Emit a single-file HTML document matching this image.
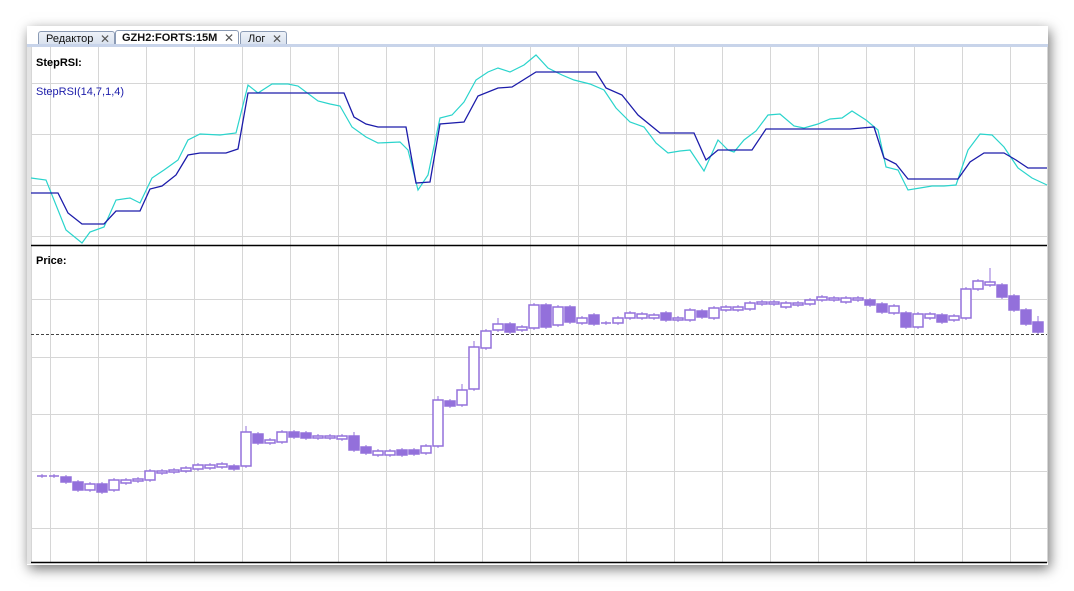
<!DOCTYPE html><html><head><meta charset="utf-8"><style>
body{margin:0;width:1074px;height:591px;background:#fff;overflow:hidden;font-family:"Liberation Sans",sans-serif;position:relative}
.win{position:absolute;left:27px;top:26px;width:1021px;height:539px;background:#fff;box-shadow:2px 4px 12px rgba(0,0,0,.55)}
.tab{position:absolute;top:5px;border:1px solid #8b9bb5;border-bottom:none;border-radius:3px 3px 0 0;background:linear-gradient(#eef2f8,#d4deec);font-size:11px;line-height:15px;padding-left:7px;color:#111;box-sizing:border-box;height:16px}
.tab.a{background:#fff;font-weight:bold;height:17px;top:4px}
.x{position:absolute;right:4px;top:0;font-size:12px;color:#555;font-weight:normal}
</style></head><body>
<div class="win">
<div class="tab" style="left:11px;width:77px">Редактор<span class="x">✕</span></div>
<div class="tab a" style="left:88px;width:124px;padding-left:6px">GZH2:FORTS:15M<span class="x">✕</span></div>
<div class="tab" style="left:213px;width:47px">Лог<span class="x">✕</span></div>
</div>
<svg style="position:absolute;left:0;top:0" width="1074" height="591">
<rect x="27" y="44" width="1021" height="3" fill="#c8d4ea"/>
<rect x="27" y="47" width="4" height="517" fill="#e4e4e4"/>
<g stroke="#d6d6d6" stroke-width="1">
<path d="M50.5 47V563M98.5 47V563M146.5 47V563M194.5 47V563M242.5 47V563M290.5 47V563M338.5 47V563M386.5 47V563M434.5 47V563M482.5 47V563M530.5 47V563M578.5 47V563M626.5 47V563M674.5 47V563M722.5 47V563M770.5 47V563M818.5 47V563M866.5 47V563M914.5 47V563M962.5 47V563M1010.5 47V563"/>
<path d="M31 83.5H1047M31 134.5H1047M31 185.5H1047M31 236.5H1047M31 299.5H1047M31 357.5H1047M31 414.5H1047M31 471.5H1047M31 528.5H1047"/>
<path d="M31.5 47V563M1047.5 47V563"/>
</g>
<path d="M31 245.5H1047M31 562.5H1047" stroke="#000" stroke-width="1.5"/>
<path d="M31 334.5H1047" stroke="#444" stroke-dasharray="3,2"/>
<polyline fill="none" stroke="#2ad4cc" stroke-width="1.2" points="31,178 46,180 66,230 82,243 90,232 104,227 116,200 130,198 140,203 152,178 164,170 178,160 188,140 200,134 220,135 236,133 248,85 258,93 272,84 288,84 298,86 318,101 330,104 340,106 352,127 366,137 378,143 400,142 408,150 418,190 428,175 440,118 452,115 464,102 476,80 488,72 498,68 510,72 524,65 536,55 548,68 562,75 574,80 590,84 604,90 616,108 630,122 644,127 656,143 668,153 680,151 690,150 704,171 718,140 728,150 734,152 744,140 756,131 768,115 780,114 794,126 804,128 818,124 830,119 842,118 852,111 866,120 878,130 886,167 898,170 908,190 920,188 932,186 944,186 956,185 968,150 980,134 992,135 1004,147 1018,168 1032,178 1047,185"/>
<polyline fill="none" stroke="#1c1caa" stroke-width="1.3" points="31,193 58,193 68,213 82,224 104,224 116,211 140,211 150,189 162,186 176,175 188,155 200,153 226,153 238,149 248,93 344,93 354,117 366,124 378,127 406,127 416,183 430,182 440,124 464,122 478,96 498,88 512,87 536,72 596,72 606,88 622,95 638,115 660,133 694,133 706,160 718,150 752,150 766,129 850,129 874,127 884,158 896,164 908,179 958,179 970,162 984,153 1004,153 1016,160 1028,168 1047,168"/>
<g font-size="11" font-weight="bold" fill="#000"><text x="36" y="66">StepRSI:</text><text x="36" y="264">Price:</text></g>
<text x="36" y="95" font-size="11" fill="#1c1caa">StepRSI(14,7,1,4)</text>
<g id="c" stroke="#9370db" stroke-width="1.5" fill="#fff"></g>
</svg>
<script>
var d=[[42,476,476,0],[54,476,476,0],[66,477,482,1],[78,482,490,1],[90,484,490,0],[102,484,492,1],[114,480,490,0],[126,480,483,0],[138,479,481,0],[150,471,480,0],[162,471,473,0],[174,470,472,0],[186,468,471,0],[198,465,469,0],[210,465,468,0],[222,464,467,0],[234,466,469,1],[246,432,466,0],[258,434,443,1],[270,440,443,0],[282,432,442,0],[294,432,437,1],[306,433,438,1],[318,436,438,0],[330,436,438,0],[342,436,439,0],[354,436,450,1],[366,447,453,1],[378,451,455,0],[390,451,455,0],[402,450,455,1],[414,450,454,1],[426,446,453,0],[438,400,446,0],[450,401,406,1],[462,390,405,0],[474,347,389,0],[486,331,348,0],[498,324,330,0],[510,324,332,1],[522,327,330,0],[534,305,328,0],[546,305,327,1],[558,307,325,0],[570,307,322,1],[582,318,323,0],[594,315,324,1],[606,323,323,0],[618,318,323,0],[630,313,318,0],[642,314,318,0],[654,315,318,0],[666,313,320,1],[678,318,320,0],[690,310,320,0],[702,311,317,1],[714,308,318,0],[726,307,310,0],[738,307,310,0],[750,303,309,0],[762,302,304,0],[774,302,304,0],[786,303,307,0],[798,303,305,0],[810,300,304,0],[822,297,300,0],[834,298,300,0],[846,298,302,0],[858,298,300,0],[870,300,305,1],[882,304,312,1],[894,306,313,0],[906,313,327,1],[918,314,327,0],[930,314,318,0],[942,315,322,1],[954,316,320,0],[966,289,318,0],[978,281,289,0],[990,282,285,0],[1002,285,297,1],[1014,296,310,1],[1026,310,324,1],[1038,322,332,1]];
var big={246:6,474:6,498:6,990:14,1038:6,354:4,462:6,438:4};
var s='';d.forEach(function(c){var x=c[0],t=c[1],b=c[2],w=big[x]||2;s+='<line stroke-width="1" x1="'+x+'" x2="'+x+'" y1="'+(t-w)+'" y2="'+(b+2)+'"/>';if(b-t<1){s+='<line x1="'+(x-5)+'" x2="'+(x+5)+'" y1="'+t+'" y2="'+t+'"/>';}else s+='<rect x="'+(x-5)+'" y="'+t+'" width="10" height="'+(b-t)+'"'+(c[3]?' fill="#9370db"':'')+'/>';});
document.getElementById('c').innerHTML=s;
</script>
</body></html>
